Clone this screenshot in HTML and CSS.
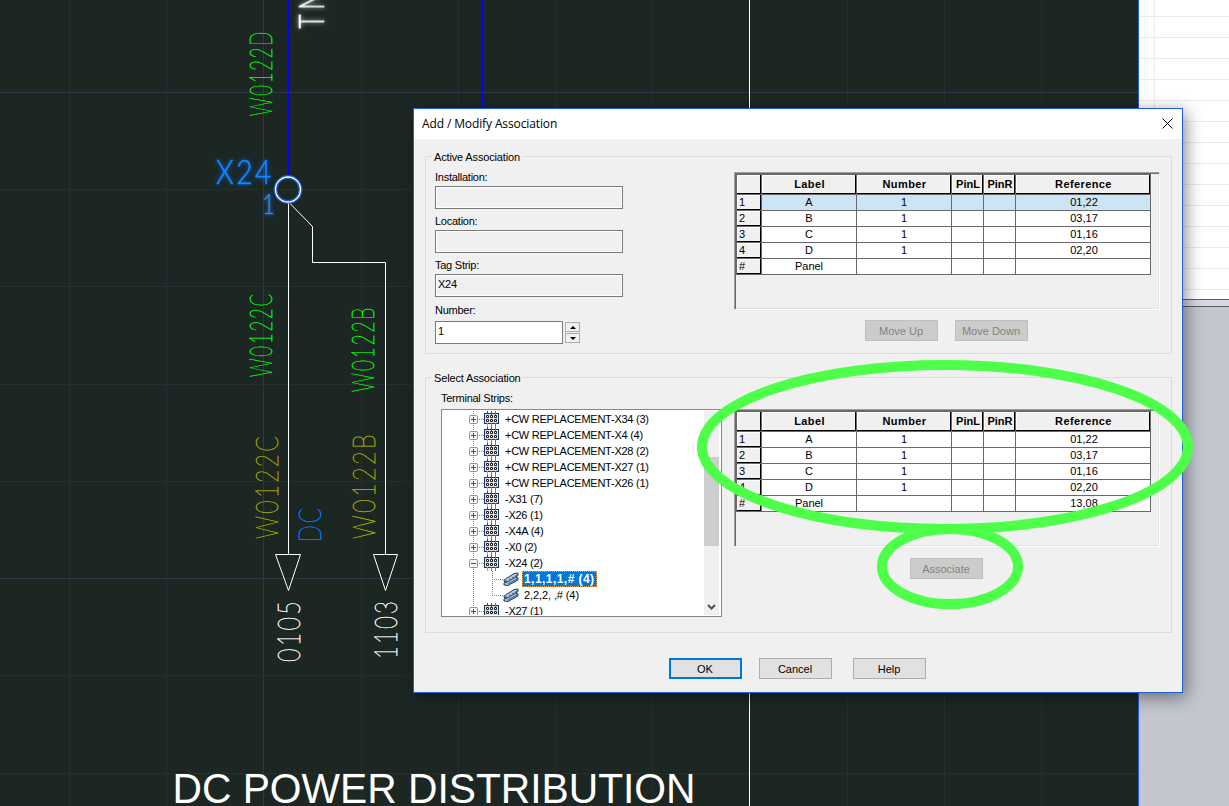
FILE: index.html
```html
<!DOCTYPE html>
<html lang="en">
<head>
    <meta charset="UTF-8">
    <title>Add / Modify Association</title>
    <link rel="stylesheet" href="styles.css">
</head>
<body>
    <!-- shared icons -->
    <svg class="defs" width="0" height="0">
        <symbol id="strip" viewBox="0 0 15 16">
            <rect x="0.5" y="2.5" width="14" height="10" fill="#dde3e8" stroke="#0d3a66"/>
            <path d="M3.5 0v3" stroke="#1f4e79"/>
            <path d="M7.5 0v4" stroke="#e01b2b"/>
            <path d="M11.5 0v4" stroke="#2f9e44"/>
            <path d="M3.5 12v4" stroke="#e8952c"/>
            <path d="M7.5 12v4" stroke="#5a7fa8"/>
            <path d="M11.5 12v4" stroke="#a05ac8"/>
            <path d="M2.5 4.500h2v2h-2zM6.500 4.500h2v2h-2zM10.500 4.500h2v2h-2zM2.500 8.500h2v2h-2zM6.500 8.500h2v2h-2zM10.500 8.500h2v2h-2z" fill="#fff" stroke="#222"/>
        </symbol>
        <symbol id="plus" viewBox="0 0 9 9">
            <rect x="0.500" y="0.500" width="8" height="8" rx="1" fill="#f4f4f4" stroke="#919191"/>
            <path d="M2 4.500h5M4.500 2v5" stroke="#3b4f9a"/>
        </symbol>
        <symbol id="minus" viewBox="0 0 9 9">
            <rect x="0.500" y="0.500" width="8" height="8" rx="1" fill="#f4f4f4" stroke="#919191"/>
            <path d="M2 4.500h5" stroke="#3b4f9a"/>
        </symbol>
        <symbol id="terminal" viewBox="0 0 16 14">
            <path d="M1 8L11 1.500L15 1L15 3.500L12.500 5L15 6V8L5 13.500L1 13V11L3.500 9.800L1 9.500Z" fill="#a9bdd6" stroke="#1d3d6b"/>
            <path d="M1 9.500L4.500 9L14.500 3M3.500 10.500L13 5M5 12L15 6.500" fill="none" stroke="#1d3d6b" stroke-width="0.800"/>
            <path d="M4 7.500l2 1M7 5.500l2 1M10 3.500l2 1" stroke="#e8eef6" stroke-width="0.800"/>
        </symbol>
    </svg>

    <div class="desktop">
        <svg class="drawing" width="1138" height="806">
            <g class="grid-minor">
                <path d="M69.500 0V806M361.500 0V806M458.500 0V806M652.500 0V806M847.500 0V806M944.500 0V806M1041.500 0V806"/>
                <path d="M0 189.500H1138M0 481.500H1138M0 675.500H1138M0 773.500H1138"/>
            </g>
            <g class="grid-mid">
                <path d="M166.500 0V806M555.500 0V806M0 286.500H1138M0 384.500H1138"/>
            </g>
            <g class="grid-major">
                <path d="M263.500 0V806M0 92.500H1138M0 578.500H1138"/>
            </g>

            <!-- wires -->
            <path class="wire-blue" d="M288.500 0V177M482.500 0V108"/>
            <path class="wire" d="M749.500 0V806M288.500 203V554M289 202.500L312.500 226.500V262.500H385.500V554"/>
            <path class="wire" d="M275.500 554.500H300.500L288.500 590.500ZM373.500 554.500H397.500L385.500 590.500Z"/>
            <circle class="terminal-glow" cx="288" cy="189.500" r="12.500"/>
            <circle class="terminal" cx="288" cy="189.500" r="12.500"/>

            <!-- wire numbers -->
            <g class="cad green">
                <text transform="translate(271.500 116) rotate(-90)" textLength="86" lengthAdjust="spacingAndGlyphs">W0122D</text>
                <text transform="translate(271.500 377) rotate(-90)" textLength="85" lengthAdjust="spacingAndGlyphs">W0122C</text>
                <text transform="translate(373.500 392) rotate(-90)" textLength="86" lengthAdjust="spacingAndGlyphs">W0122B</text>
            </g>
            <g class="cad olive">
                <text transform="translate(277.500 539) rotate(-90)" textLength="105" lengthAdjust="spacingAndGlyphs">W0122C</text>
                <text transform="translate(374.500 539) rotate(-90)" textLength="107" lengthAdjust="spacingAndGlyphs">W0122B</text>
            </g>
            <g class="cad white">
                <text transform="translate(299.500 662) rotate(-90)" textLength="63" lengthAdjust="spacingAndGlyphs">0105</text>
                <text transform="translate(396.500 659) rotate(-90)" textLength="60" lengthAdjust="spacingAndGlyphs">1103</text>
            </g>
            <text class="cad blue" transform="translate(320.500 542) rotate(-90)" textLength="36" lengthAdjust="spacingAndGlyphs">DC</text>

            <text class="cad tag" x="216" y="184" textLength="58" lengthAdjust="spacingAndGlyphs">X24</text>
            <text class="cad pin" x="262" y="213.500" textLength="13" lengthAdjust="spacingAndGlyphs">1</text>
            <text class="cad tn" transform="translate(324 28.500) rotate(-90)" textLength="42" lengthAdjust="spacingAndGlyphs">TN</text>

            <text class="heading" x="172.500" y="803" textLength="523" lengthAdjust="spacingAndGlyphs">DC POWER DISTRIBUTION</text>
        </svg>

        <div class="side">
            <div class="side-list"></div>
            <div class="side-splitter"></div>
            <div class="side-empty"></div>
        </div>
    </div>

    <div class="dialog">
        <div class="titlebar">
            <span class="title">Add / Modify Association</span>
            <svg class="close" width="11" height="11"><path d="M0.500 0.500L10.500 10.500M10.500 0.500L0.500 10.500"/></svg>
        </div>

        <div class="content">
            <div class="group group-active">
                <span class="legend">Active Association</span>
                <div class="fields">
                    <label>Installation:</label>
                    <div class="field"></div>
                    <label>Location:</label>
                    <div class="field"></div>
                    <label>Tag Strip:</label>
                    <div class="field">X24</div>
                    <label class="number-label">Number:</label>
                    <div class="number">
                        <div class="field editable">1</div>
                        <div class="spinner">
                            <div class="spin"><i class="up"></i></div>
                            <div class="spin"><i class="down"></i></div>
                        </div>
                    </div>
                </div>
                <div class="right">
                    <div class="sunken">
                        <table>
                            <colgroup><col class="c-num"><col class="c-wide"><col class="c-wide"><col class="c-pin"><col class="c-pin"><col class="c-ref"></colgroup>
                            <tr><th></th><th>Label</th><th>Number</th><th class="tight">PinL</th><th class="tight">PinR</th><th>Reference</th></tr>
                            <tr class="current"><td class="row-head">1</td><td>A</td><td>1</td><td></td><td></td><td>01,22</td></tr>
                            <tr><td class="row-head">2</td><td>B</td><td>1</td><td></td><td></td><td>03,17</td></tr>
                            <tr><td class="row-head">3</td><td>C</td><td>1</td><td></td><td></td><td>01,16</td></tr>
                            <tr><td class="row-head">4</td><td>D</td><td>1</td><td></td><td></td><td>02,20</td></tr>
                            <tr><td class="row-head">#</td><td>Panel</td><td></td><td></td><td></td><td></td></tr>
                        </table>
                    </div>
                    <div class="actions move">
                        <div class="button disabled">Move Up</div>
                        <div class="button disabled">Move Down</div>
                    </div>
                </div>
            </div>

            <div class="group group-select">
                <span class="legend">Select Association</span>
                <div class="strips">
                    <label>Terminal Strips:</label>
                    <div class="tree">
                        <div class="nodes">
                            <div class="node"><svg class="box"><use href="#plus"/></svg><svg class="icon"><use href="#strip"/></svg><span>+CW REPLACEMENT-X34 (3)</span></div>
                            <div class="node"><svg class="box"><use href="#plus"/></svg><svg class="icon"><use href="#strip"/></svg><span>+CW REPLACEMENT-X4 (4)</span></div>
                            <div class="node"><svg class="box"><use href="#plus"/></svg><svg class="icon"><use href="#strip"/></svg><span>+CW REPLACEMENT-X28 (2)</span></div>
                            <div class="node"><svg class="box"><use href="#plus"/></svg><svg class="icon"><use href="#strip"/></svg><span>+CW REPLACEMENT-X27 (1)</span></div>
                            <div class="node"><svg class="box"><use href="#plus"/></svg><svg class="icon"><use href="#strip"/></svg><span>+CW REPLACEMENT-X26 (1)</span></div>
                            <div class="node"><svg class="box"><use href="#plus"/></svg><svg class="icon"><use href="#strip"/></svg><span>-X31 (7)</span></div>
                            <div class="node"><svg class="box"><use href="#plus"/></svg><svg class="icon"><use href="#strip"/></svg><span>-X26 (1)</span></div>
                            <div class="node"><svg class="box"><use href="#plus"/></svg><svg class="icon"><use href="#strip"/></svg><span>-X4A (4)</span></div>
                            <div class="node"><svg class="box"><use href="#plus"/></svg><svg class="icon"><use href="#strip"/></svg><span>-X0 (2)</span></div>
                            <div class="node"><svg class="box"><use href="#minus"/></svg><svg class="icon"><use href="#strip"/></svg><span>-X24 (2)</span></div>
                            <div class="node child"><i class="branch"></i><svg class="leaf"><use href="#terminal"/></svg><span class="selected">1,1,1,1,# (4)</span></div>
                            <div class="node child last"><i class="branch"></i><svg class="leaf"><use href="#terminal"/></svg><span>2,2,2, ,# (4)</span></div>
                            <div class="node"><svg class="box"><use href="#plus"/></svg><svg class="icon"><use href="#strip"/></svg><span>-X27 (1)</span></div>
                        </div>
                        <div class="scrollbar">
                            <div class="thumb"></div>
                            <svg width="9" height="6"><path d="M1 1L4.500 4.500L8 1"/></svg>
                        </div>
                    </div>
                </div>
                <div class="right">
                    <div class="sunken">
                        <table>
                            <colgroup><col class="c-num"><col class="c-wide"><col class="c-wide"><col class="c-pin"><col class="c-pin"><col class="c-ref"></colgroup>
                            <tr><th></th><th>Label</th><th>Number</th><th class="tight">PinL</th><th class="tight">PinR</th><th>Reference</th></tr>
                            <tr><td class="row-head">1</td><td>A</td><td>1</td><td></td><td></td><td>01,22</td></tr>
                            <tr><td class="row-head">2</td><td>B</td><td>1</td><td></td><td></td><td>03,17</td></tr>
                            <tr><td class="row-head">3</td><td>C</td><td>1</td><td></td><td></td><td>01,16</td></tr>
                            <tr><td class="row-head">4</td><td>D</td><td>1</td><td></td><td></td><td>02,20</td></tr>
                            <tr><td class="row-head">#</td><td>Panel</td><td></td><td></td><td></td><td>13,08</td></tr>
                        </table>
                    </div>
                    <div class="actions associate">
                        <div class="button disabled">Associate</div>
                    </div>
                </div>
            </div>

            <div class="footer">
                <div class="button default">OK</div>
                <div class="button">Cancel</div>
                <div class="button">Help</div>
            </div>
        </div>
    </div>

    <!-- highlight rings -->
    <svg class="rings" width="1229" height="806">
        <ellipse cx="945" cy="447" rx="243" ry="82"/>
        <ellipse cx="950" cy="566.500" rx="68" ry="37.500"/>
    </svg>
</body>
</html>
```
FILE: styles.css
```css
* {
    box-sizing: border-box;
}
body {
    margin: 0;
    width: 1229px;
    height: 806px;
    overflow: hidden;
    position: relative;
    font-family: "Liberation Sans", Arial, sans-serif;
    font-size: 11px;
    letter-spacing: -0.25px;
    color: #000;
}
.defs {
    position: absolute;
}
.desktop {
    display: flex;
    height: 806px;
}

/* drawing */
.drawing {
    flex: none;
    background: #1c2724;
    display: block;
}
.drawing path {
    fill: none;
    stroke-width: 1;
}
.grid-minor {
    stroke: #242f2e;
}
.grid-mid {
    stroke: #252f35;
}
.grid-major {
    stroke: #303845;
}
.wire-blue {
    stroke: #0000ff;
}
.wire {
    stroke: #fff;
}
.terminal {
    fill: none;
    stroke: #fff;
    stroke-width: 1.3;
}
.terminal-glow {
    fill: none;
    stroke: #1f66d8;
    stroke-width: 4;
    opacity: 0.8;
}
.cad {
    font-family: Lato, sans-serif;
    font-weight: 100;
    font-size: 31px;
    letter-spacing: 3px;
    stroke-width: 0.6;
}
.green {
    fill: #00ff00;
    stroke: #00ff00;
}
.olive {
    fill: #a8a800;
    stroke: #a8a800;
}
.white {
    fill: #fff;
    stroke: #fff;
}
.blue {
    fill: #007fff;
    stroke: #007fff;
}
.tag {
    font-size: 33px;
    font-weight: 300;
    fill: #1583ff;
    stroke: #1583ff;
    filter: drop-shadow(0 0 2px #0a5fd0);
}
.pin {
    font-size: 28px;
    font-weight: 300;
    letter-spacing: 0;
    fill: #5590b0;
    filter: drop-shadow(0 0 2px #1560d0) drop-shadow(0 0 1px #1560d0);
}
.tn {
    font-size: 36px;
    font-weight: 300;
    letter-spacing: 7px;
    fill: #fff;
    stroke: #fff;
    filter: drop-shadow(0 0 2px #ccc);
}
.heading {
    font-size: 42px;
    letter-spacing: 0;
    fill: #fff;
}

/* side pane */
.side {
    flex: 1;
    display: flex;
    flex-direction: column;
    border-left: 1px solid #1f5fe0;
}
.side-list {
    height: 299px;
    background:
        linear-gradient(90deg, transparent 15px, #ececec 15px, #ececec 16px, transparent 16px),
        repeating-linear-gradient(#fff 0, #fff 20px, #ececec 20px, #ececec 21px) 0 -4px / 100% 630px;
}
.side-splitter {
    height: 8px;
    background: #d5d8e2;
    border-top: 1px solid #5c5c5c;
    border-bottom: 1px solid #5c5c5c;
}
.side-empty {
    flex: 1;
    background: #c3c5cf;
}

/* dialog window */
.dialog {
    position: absolute;
    left: 413px;
    top: 108px;
    width: 770px;
    height: 585px;
    border: 1px solid #1f5fd8;
    background: #f0f0f0;
    box-shadow: 3px 4px 16px rgba(0, 0, 0, 0.45);
}
.titlebar {
    height: 30px;
    background: #fff;
    display: flex;
    align-items: center;
    justify-content: space-between;
    padding: 0 9px 2px 8px;
}
.title {
    font-family: "Open Sans", "Noto Sans", sans-serif;
    font-size: 12px;
    letter-spacing: -0.12px;
}
.close {
    fill: none;
    stroke: #000;
}
.content {
    padding: 17px 10px 0 11px;
}
.group {
    position: relative;
    display: flex;
    justify-content: space-between;
    border: 1px solid #dcdcdc;
    padding-right: 11px;
}
.group-active {
    height: 198px;
    padding-left: 9px;
    margin-bottom: 23px;
}
.group-select {
    height: 256px;
    padding-left: 15px;
}
.legend {
    position: absolute;
    left: 6px;
    top: -7px;
    padding: 0 2px;
    line-height: 14px;
    letter-spacing: -0.15px;
    background: #f0f0f0;
}
label {
    display: block;
    line-height: 13px;
}
.fields {
    width: 188px;
    padding-top: 14px;
}
.fields label {
    margin-bottom: 2px;
}
.field {
    height: 23px;
    margin-bottom: 6px;
    padding: 3px 2px;
    line-height: 13px;
    border: 1px solid #7a7a7a;
    box-shadow: inset 0 0 0 1px #fff;
}
.fields .number-label {
    margin: 7px 0 4px;
}
.number {
    display: flex;
    gap: 2px;
}
.editable {
    width: 128px;
    background: #fff;
}
.spinner {
    padding-top: 1px;
}
.spin {
    width: 15px;
    height: 10px;
    margin-bottom: 1px;
    display: flex;
    align-items: center;
    justify-content: center;
    background: #f0f0f0;
    border: 1px solid #acacac;
}
.spin i {
    border: 3px solid transparent;
}
.spin .up {
    border-top: 0;
    border-bottom-color: #000;
}
.spin .down {
    border-bottom: 0;
    border-top-color: #000;
}

/* terminal tables */
.right {
    width: 426px;
    padding-top: 15px;
}
.group-select .right {
    padding-top: 31px;
}
.sunken {
    height: 138px;
    border: 1px solid;
    border-color: #a0a0a0 #fff #fff #a0a0a0;
    box-shadow: inset 1px 1px #696969, inset -1px -1px #e3e3e3;
    padding: 1px;
}
table {
    width: 415px;
    table-layout: fixed;
    border-collapse: separate;
    border-spacing: 0;
    border-top: 1px solid #696969;
    border-left: 1px solid #696969;
    letter-spacing: 0;
}
.c-num {
    width: 25px;
}
.c-wide {
    width: 95px;
}
.c-pin {
    width: 32px;
}
.c-ref {
    width: 135px;
}
th, td {
    height: 16px;
    padding: 0;
    line-height: 13px;
    text-align: center;
    border-right: 1px solid #696969;
    border-bottom: 1px solid #696969;
    background: #fff;
}
th {
    height: 20px;
    padding-left: 1px;
    letter-spacing: 0.4px;
    background: #f0f0f0;
    box-shadow: inset -1px -1px #000, inset 1px 1px #fff;
}
td:last-child {
    padding-left: 2px;
}
.tight {
    letter-spacing: 0;
}
.current td {
    background: #cce4f4;
}
td.row-head {
    text-align: left;
    padding-left: 2px;
    background: #f0f0f0;
    box-shadow: inset -1px -1px #000, inset 1px 1px #fff;
}

/* buttons */
.button {
    width: 73px;
    height: 21px;
    padding-right: 1px;
    line-height: 21px;
    text-align: center;
    letter-spacing: 0;
    background: #e1e1e1;
    border: 1px solid #adadad;
}
.disabled {
    background: #ccc;
    border-color: #bfbfbf;
    color: #838383;
}
.default {
    border: 2px solid #0078d7;
    line-height: 19px;
}
.actions {
    display: flex;
    gap: 17px;
}
.move {
    padding: 10px 0 0 131px;
}
.associate {
    padding: 11px 0 0 176px;
}
.footer {
    display: flex;
    padding: 25px 0 0 244px;
}
.footer .button {
    margin-right: 17px;
}
.footer .button:nth-child(2) {
    margin-right: 21px;
}

/* tree */
.strips {
    width: 281px;
    padding-top: 14px;
}
.tree {
    display: flex;
    height: 208px;
    margin-top: 4px;
    padding: 1px;
    background: #fff;
    border: 1px solid #828790;
}
.nodes {
    flex: 1;
    overflow: hidden;
    background: repeating-linear-gradient(#808080 0, #808080 1px, #fff 1px, #fff 2px) 30px 0 / 1px 100% no-repeat;
}
.node {
    display: flex;
    align-items: center;
    height: 16px;
    padding-left: 26px;
    white-space: pre;
    line-height: 14px;
    background: repeating-linear-gradient(90deg, #808080 0, #808080 1px, transparent 1px, transparent 2px) 36px 8px / 5px 1px no-repeat;
}
.box {
    width: 9px;
    height: 9px;
    flex: none;
}
.icon {
    width: 15px;
    height: 16px;
    margin: 0 6px;
    flex: none;
}
.child {
    padding-left: 49px;
    background: none;
}
.branch {
    width: 11px;
    height: 16px;
    background:
        repeating-linear-gradient(#808080 0, #808080 1px, transparent 1px, transparent 2px) 0 0 / 1px 100% no-repeat,
        repeating-linear-gradient(90deg, #808080 0, #808080 1px, transparent 1px, transparent 2px) 0 8px / 100% 1px no-repeat;
}
.last .branch {
    background-size: 1px 8px, 100% 1px;
}
.leaf {
    width: 16px;
    height: 14px;
    flex: none;
    margin-right: 3px;
}
.child span {
    padding: 0 2px;
    letter-spacing: -0.1px;
}
.child .selected {
    height: 16px;
    padding: 0 1px;
    font-size: 12px;
    font-weight: bold;
    letter-spacing: 0.45px;
    color: #fff;
    background: #0078d7;
    border: 1px dotted #f0a050;
}
.scrollbar {
    width: 15px;
    margin-right: 1px;
    display: flex;
    flex-direction: column;
    align-items: center;
    justify-content: space-between;
    padding: 46px 0 5px;
    background: #f0f0f0;
}
.thumb {
    width: 15px;
    height: 89px;
    background: #cdcdcd;
}
.scrollbar path {
    fill: none;
    stroke: #505050;
    stroke-width: 2;
}

.rings {
    position: absolute;
    left: 0;
    top: 0;
    fill: none;
    stroke: #4dff48;
    stroke-width: 10;
}
```
